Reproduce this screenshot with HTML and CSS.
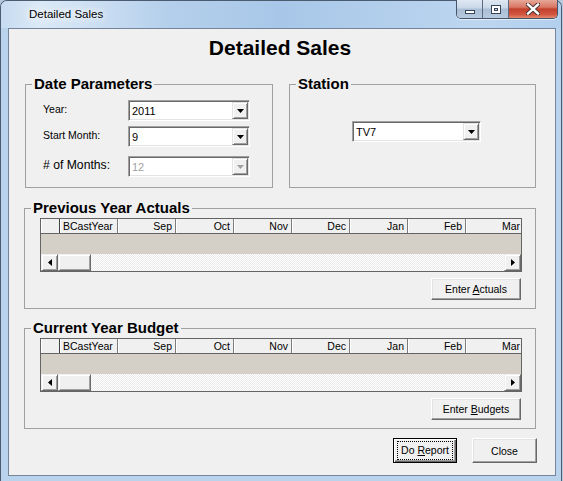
FILE: index.html
```html
<!DOCTYPE html>
<html>
<head>
<meta charset="utf-8">
<link rel="stylesheet" href="styles.css">
</head>
<body>
<div class="window">
  <div class="titlebar">
    <span class="title">Detailed Sales</span>
    <div class="caption-btns">
      <div class="cb cb-min"><span class="min-glyph"></span></div>
      <div class="cb cb-max"><span class="max-glyph"></span></div>
      <div class="cb cb-close">
        <svg width="14" height="12" viewBox="0 0 14 12"><path d="M2 1.5L12 10.5M12 1.5L2 10.5" stroke="#3a2a2a" stroke-width="4.2" stroke-linecap="square"/><path d="M2 1.5L12 10.5M12 1.5L2 10.5" stroke="#fff" stroke-width="2.4" stroke-linecap="square"/></svg>
      </div>
    </div>
  </div>
  <div class="client">
    <h1 class="heading">Detailed Sales</h1>
    <div class="top-row">
      <fieldset class="group group-date">
        <legend>Date Parameters</legend>
        <div class="gbody date-body">
          <div class="param-row r1">
            <span class="lbl">Year:</span>
            <div class="combo"><span class="val">2011</span><span class="drop"><svg width="7" height="4" viewBox="0 0 7 4"><path d="M0 0H7L3.5 4Z" fill="#000"/></svg></span></div>
          </div>
          <div class="param-row r2">
            <span class="lbl">Start Month:</span>
            <div class="combo"><span class="val">9</span><span class="drop"><svg width="7" height="4" viewBox="0 0 7 4"><path d="M0 0H7L3.5 4Z" fill="#000"/></svg></span></div>
          </div>
          <div class="param-row r3">
            <span class="lbl lbl-wide"># of Months:</span>
            <div class="combo disabled"><span class="val">12</span><span class="drop"><svg width="7" height="4" viewBox="0 0 7 4"><path d="M0 0H7L3.5 4Z" fill="#a0a0a0"/></svg></span></div>
          </div>
        </div>
      </fieldset>
      <fieldset class="group group-station">
        <legend>Station</legend>
        <div class="gbody station-body">
          <div class="combo combo-station"><span class="val">TV7</span><span class="drop"><svg width="7" height="4" viewBox="0 0 7 4"><path d="M0 0H7L3.5 4Z" fill="#000"/></svg></span></div>
        </div>
      </fieldset>
    </div>

    <fieldset class="group group-grid group-prev">
      <legend>Previous Year Actuals</legend>
      <div class="gbody grid-body">
        <div class="grid">
          <div class="ghead">
            <span class="gc gc0"></span><span class="gc gc1">BCastYear</span><span class="gc">Sep</span><span class="gc">Oct</span><span class="gc">Nov</span><span class="gc">Dec</span><span class="gc">Jan</span><span class="gc">Feb</span><span class="gc">Mar</span>
          </div>
          <div class="grow"></div>
          <div class="gscroll">
            <span class="sb"><svg width="4" height="7" viewBox="0 0 4 7"><path d="M4 0V7L0 3.5Z" fill="#000"/></svg></span>
            <span class="thumb"></span>
            <span class="track"></span>
            <span class="sb"><svg width="4" height="7" viewBox="0 0 4 7"><path d="M0 0V7L4 3.5Z" fill="#000"/></svg></span>
          </div>
        </div>
        <div class="btn-row"><button class="btn btn-enter">Enter <u>A</u>ctuals</button></div>
      </div>
    </fieldset>

    <fieldset class="group group-grid group-cur">
      <legend>Current Year Budget</legend>
      <div class="gbody grid-body">
        <div class="grid">
          <div class="ghead">
            <span class="gc gc0"></span><span class="gc gc1">BCastYear</span><span class="gc">Sep</span><span class="gc">Oct</span><span class="gc">Nov</span><span class="gc">Dec</span><span class="gc">Jan</span><span class="gc">Feb</span><span class="gc">Mar</span>
          </div>
          <div class="grow"></div>
          <div class="gscroll">
            <span class="sb"><svg width="4" height="7" viewBox="0 0 4 7"><path d="M4 0V7L0 3.5Z" fill="#000"/></svg></span>
            <span class="thumb"></span>
            <span class="track"></span>
            <span class="sb"><svg width="4" height="7" viewBox="0 0 4 7"><path d="M0 0V7L4 3.5Z" fill="#000"/></svg></span>
          </div>
        </div>
        <div class="btn-row"><button class="btn btn-enter">Enter <u>B</u>udgets</button></div>
      </div>
    </fieldset>

    <div class="footer">
      <button class="btn btn-default"><span class="focus">Do <u>R</u>eport</span></button>
      <button class="btn btn-close">Close</button>
    </div>
  </div>
</div>
</body>
</html>
```

FILE: styles.css
```css
* { box-sizing: border-box; }
html, body { margin: 0; padding: 0; }
body {
  background: #b7c9dc;
  font-family: "Liberation Sans", Arial, sans-serif;
  font-size: 10.5px;
  color: #000;
  overflow: hidden;
  width: 563px;
  height: 481px;
}

/* window frame */
.window {
  width: 562px;
  height: 481px;
  border: 1px solid #4c5c70;
  border-bottom: none;
  border-radius: 7px 7px 0 0;
  background: #bad3ed;
  display: flex;
  flex-direction: column;
}
.titlebar {
  height: 27px;
  flex: 0 0 27px;
  display: flex;
  justify-content: space-between;
  align-items: flex-start;
  padding-left: 28px;
  border-radius: 6px 6px 0 0;
  background: linear-gradient(90deg, #c6dbf1 0%, #dbe9f6 7%, #d0e2f4 14%, #b4cfeb 30%, #a8c7e8 50%, #b3cfec 70%, #bdd6f0 85%, #b2cfed 100%);
}
.title {
  margin-top: 7px;
  font-family: "Liberation Sans", Arial, sans-serif;
  font-size: 11.5px;
  line-height: 13px;
  color: #000;
  text-shadow: 0 0 6px #fff, 0 0 10px #fff, 0 0 14px #fff;
}
.caption-btns {
  display: flex;
  margin-right: 3px;
  margin-top: -1px;
  height: 19px;
  border: 1px solid #44546a;
  border-top: none;
  border-radius: 0 0 5px 5px;
  overflow: hidden;
  box-shadow: 0 1px 0 rgba(255,255,255,0.6);
}
.cb {
  height: 100%;
  display: flex;
  align-items: center;
  justify-content: center;
}
.cb-min, .cb-max {
  width: 26px;
  background: linear-gradient(180deg, #dfe8f2 0%, #c9d7e7 45%, #a9bdd5 50%, #b7cade 100%);
  border-right: 1px solid #5a6a80;
}
.cb-close {
  width: 48px;
  background: linear-gradient(180deg, #e7a898 0%, #d97766 40%, #c3412c 50%, #d2553f 80%, #e08a6e 100%);
}
.min-glyph {
  width: 10px;
  height: 4px;
  margin-top: 6px;
  background: #fff;
  border: 1px solid #39465a;
}
.max-glyph {
  width: 10px;
  height: 9px;
  border: 1px solid #39465a;
  box-shadow: inset 0 0 0 2px #fff, inset 0 0 0 3px #39465a;
  background: #c9d7e7;
}

/* client area */
.client {
  margin: 0 5px 5px 7px;
  flex: 1;
  border: 1px solid #75869a;
  background: #f0f0f0;
  padding: 7px 19px 0 15px;
}
.heading {
  margin: 0 0 16px 0;
  font: bold 21px/24px "Liberation Sans", Arial, sans-serif;
  text-align: center;
}

/* group boxes */
fieldset.group {
  margin: 0;
  padding: 0;
  border: 1px solid #a0a0a0;
  min-width: 0;
}
fieldset.group legend {
  font: bold 15px/16px "Liberation Sans", Arial, sans-serif;
  padding: 0 2px;
  margin-left: 6px;
}
.top-row {
  display: flex;
  gap: 16px;
  margin-left: 1px;
}
fieldset.group-date { width: 248px; }
fieldset.group-station { width: 247px; }
.date-body { padding: 0 0 10px 17px; }
.station-body { padding: 29px 0 0 62px; }
.param-row {
  display: flex;
  align-items: flex-start;
  height: 21px;
}
.r1 { margin-top: 8px; }
.r2 { margin-top: 5px; }
.r3 { margin-top: 9px; }
.lbl {
  width: 85px;
  padding-top: 3px;
  line-height: 12px;
  white-space: nowrap;
}
.lbl-wide { font-size: 12.2px; padding-top: 2px; line-height: 14px; }

/* combo boxes */
.combo {
  width: 122px;
  height: 21px;
  background: #fff;
  border: 1px solid;
  border-color: #a0a0a0 #fff #fff #a0a0a0;
  box-shadow: inset 1px 1px #696969, inset -1px -1px #e3e3e3;
  display: flex;
  align-items: center;
  font-size: 11px;
}
.combo-station { width: 129px; }
.combo .val {
  padding-left: 3px;
  line-height: 13px;
  padding-top: 1px;
}
.combo.disabled .val { color: #a0a0a0; }
.drop {
  margin-left: auto;
  margin-right: 1px;
  width: 16px;
  height: 17px;
  background: #f0f0f0;
  border: 1px solid;
  border-color: #e3e3e3 #696969 #696969 #e3e3e3;
  box-shadow: inset 1px 1px #fff, inset -1px -1px #a0a0a0;
  display: flex;
  align-items: center;
  justify-content: center;
}
.drop svg { display: block; margin-top: 1px; }

/* grid groups */
.grid-body { padding: 2px 13px 8px 15px; }
fieldset.group-prev { margin-top: 12px; }
fieldset.group-cur { margin-top: 11px; }
.grid {
  width: 482px;
  border: 1px solid #646464;
  background: #d4d0c8;
  overflow: hidden;
}
.ghead {
  display: flex;
  height: 15px;
  border-bottom: 1px solid #646464;
  background: #f0f0f0;
  white-space: nowrap;
}
.gc {
  flex: 0 0 58px;
  border-right: 1px solid #7c7c7c;
  box-shadow: inset 1px 0 #fff;
  text-align: right;
  padding-right: 3px;
  line-height: 14px;
  overflow: hidden;
}
.gc0 { flex-basis: 19px; border-right-color: #404040; }
.gc1 { text-align: left; padding-left: 3px; }
.grow { height: 20px; background: #d4d0c8; }
.gscroll {
  display: flex;
  height: 17px;
  background: repeating-conic-gradient(#ffffff 0 25%, #ebebeb 0 50%) 0 0 / 2px 2px;
}
.sb, .thumb {
  height: 17px;
  background: #f0f0f0;
  border: 1px solid;
  border-color: #f0f0f0 #696969 #696969 #f0f0f0;
  box-shadow: inset 1px 1px #fff, inset -1px -1px #a0a0a0;
}
.sb {
  width: 17px;
  display: flex;
  align-items: center;
  justify-content: center;
}
.sb svg { display: block; }
.thumb { width: 33px; }
.track { flex: 1; }

.btn-row {
  display: flex;
  justify-content: flex-end;
  margin-top: 6px;
  padding-right: 1px;
}

/* buttons */
.btn {
  font: 10.5px "Liberation Sans", Arial, sans-serif;
  color: #000;
  background: #f0f0f0;
  border: 1px solid;
  border-color: #fff #696969 #696969 #fff;
  box-shadow: inset -1px -1px #a0a0a0, inset 1px 1px #e3e3e3;
  padding: 0;
  margin: 0;
}
.btn-enter { width: 90px; height: 22px; }
.footer {
  display: flex;
  justify-content: flex-end;
  gap: 15px;
  margin-top: 9px;
  margin-right: -1px;
}
.btn-default, .btn-close { height: 25px; }
.btn-default {
  width: 64px;
  border: 1px solid #000;
  box-shadow: inset 1px 1px #fff, inset -1px -1px #696969, inset -2px -2px #a0a0a0;
  padding: 2px 3px;
}
.btn-default .focus {
  display: block;
  height: 100%;
  border: 1px dotted #000;
  line-height: 17px;
}
.btn-close { width: 65px; }
```
